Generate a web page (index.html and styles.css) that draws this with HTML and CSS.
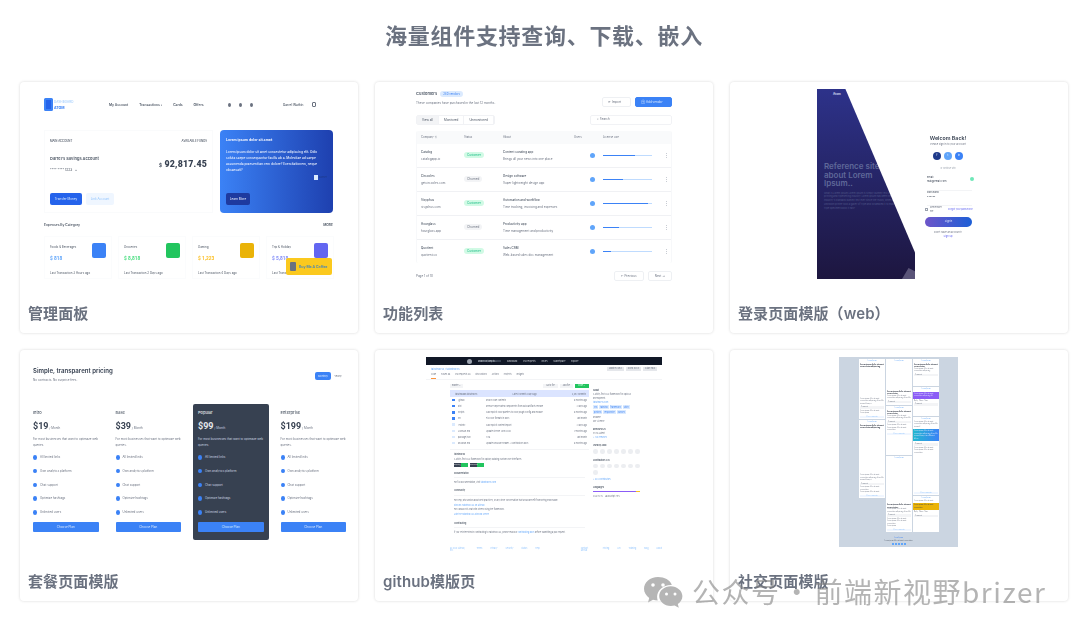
FILE: index.html
```html
<!DOCTYPE html>
<html lang="zh-CN">
<head>
    <meta charset="UTF-8">
    <title>海量组件</title>
    <link rel="stylesheet" href="styles.css">
</head>
<body>
    <h1 class="page-title">海量组件支持查询、下载、嵌入</h1>

    <div class="card-grid">
        <!-- Dashboard -->
        <div class="card">
            <div class="thumb dash">
                <div class="dash-nav">
                    <div class="dash-brand">
                        <div class="dash-logo"></div>
                        <div><div class="dash-brand-top">DASHBOARD</div><div class="dash-brand-name">ATOM</div></div>
                    </div>
                    <div class="dash-links"><span>My Account</span><span>Transactions ›</span><span>Cards</span><span>Offers</span></div>
                    <div class="dash-dots"><i></i><i></i><i></i></div>
                    <div class="dash-user">Darrel Watkin</div>
                    <div class="dash-exit"></div>
                </div>
                <div class="dash-panels">
                    <div class="account">
                        <div class="account-top"><span>MAIN ACCOUNT</span><span>AVAILABLE FUNDS</span></div>
                        <div class="account-mid">
                            <div>
                                <div class="account-name">Darrel's Savings Account</div>
                                <div class="account-no">**** **** 1223 &nbsp; ⌄</div>
                            </div>
                            <div class="account-sum"><small>$</small> 92,817.45</div>
                        </div>
                        <div class="account-btns"><span class="btn-blue">Transfer Money</span><span class="btn-pale">Link Account</span></div>
                    </div>
                    <div class="promo">
                        <div class="promo-title">Lorem ipsum dolor sit amet</div>
                        <p>Lorem ipsum dolor sit amet consectetur adipiscing elit. Odio soluta saepe consequuntur facilis ab a. Molestiae ad saepe assumenda praesentium rem dolore? Exercitationem, neque obcaecati?</p>
                        <div class="promo-img"><i></i>banner</div>
                        <span class="promo-btn">Learn More</span>
                    </div>
                </div>
                <div class="dash-head"><span>Expenses By Category</span><span>MORE</span></div>
                <div class="cats">
                    <div class="cat"><div class="cat-text"><span>Foods &amp; Beverages</span><b class="c-blue">$ 818</b></div><div class="cat-icon bg-blue"></div><em>Last Transaction 3 Hours ago</em></div>
                    <div class="cat"><div class="cat-text"><span>Groceries</span><b class="c-green">$ 8,818</b></div><div class="cat-icon bg-green"></div><em>Last Transaction 2 Days ago</em></div>
                    <div class="cat"><div class="cat-text"><span>Gaming</span><b class="c-amber">$ 1,223</b></div><div class="cat-icon bg-amber"></div><em>Last Transaction 4 Days ago</em></div>
                    <div class="cat"><div class="cat-text"><span>Trip &amp; Holiday</span><b class="c-indigo">$ 5,818</b></div><div class="cat-icon bg-indigo"></div><em>Last Transaction 1 Week ago</em></div>
                </div>
                <div class="coffee"><i></i>Buy Me A Coffee</div>
            </div>
            <div class="caption">管理面板</div>
        </div>

        <!-- Customers table -->
        <div class="card">
            <div class="thumb list">
                <div class="list-top">
                    <div>
                        <div class="list-title">Customers <span>240 vendors</span></div>
                        <div class="list-sub">These companies have purchased in the last 12 months.</div>
                    </div>
                    <div class="list-actions"><span class="ghost">⟳ Import</span><span class="solid">⊕ Add vendor</span></div>
                </div>
                <div class="list-tools">
                    <div class="tabs"><span class="on">View all</span><span>Monitored</span><span>Unmonitored</span></div>
                    <div class="search">⌕ Search</div>
                </div>
                <div class="table">
                    <div class="t-row t-head"><span>Company ⇅</span><span>Status</span><span>About</span><span>Users</span><span>License use</span><span></span></div>
                    <div class="t-row"><div><b>Catalog</b><br>catalogapp.io</div><div><span class="tag tag-green">Customer</span></div><div><b>Content curating app</b><br>Brings all your news into one place</div><div><i class="dot"></i></div><div class="bar"><i class="w66"></i></div><div class="more">⋮</div></div>
                    <div class="t-row"><div><b>Circooles</b><br>getcircooles.com</div><div><span class="tag tag-gray">Churned</span></div><div><b>Design software</b><br>Super lightweight design app</div><div><i class="dot"></i></div><div class="bar"><i class="w40"></i></div><div class="more">⋮</div></div>
                    <div class="t-row"><div><b>Sisyphus</b><br>sisyphus.com</div><div><span class="tag tag-green">Customer</span></div><div><b>Automation and workflow</b><br>Time tracking, invoicing and expenses</div><div><i class="dot"></i></div><div class="bar"><i class="w92"></i></div><div class="more">⋮</div></div>
                    <div class="t-row"><div><b>Hourglass</b><br>hourglass.app</div><div><span class="tag tag-gray">Churned</span></div><div><b>Productivity app</b><br>Time management and productivity</div><div><i class="dot"></i></div><div class="bar"><i class="w33"></i></div><div class="more">⋮</div></div>
                    <div class="t-row"><div><b>Quotient</b><br>quotient.co</div><div><span class="tag tag-green">Customer</span></div><div><b>Sales CRM</b><br>Web-based sales doc management</div><div><i class="dot"></i></div><div class="bar"><i class="w16"></i></div><div class="more">⋮</div></div>
                </div>
                <div class="pager"><span>Page 1 of 10</span><div><span class="ghost">← Previous</span><span class="ghost">Next →</span></div></div>
            </div>
            <div class="caption">功能列表</div>
        </div>

        <!-- Login -->
        <div class="card">
            <div class="thumb login">
                <div class="login-art">
                    <div class="login-logo">Atom</div>
                    <h3>Reference site<br>about Lorem<br>Ipsum..</h3>
                    <p>What is Lorem Ipsum Lorem Ipsum is simply dummy text of the printing and typesetting industry Lorem Ipsum has been the industry's standard dummy text ever since the 1500s, when an unknown printer took a galley of type and scrambled it to make a type specimen book it has?</p>
                </div>
                <div class="login-form">
                    <div class="login-title">Welcom Back!</div>
                    <div class="login-sub">Please sign in to your account</div>
                    <div class="socials"><span class="s1">f</span><span class="s2">t</span><span class="s3">in</span></div>
                    <div class="login-or">or continue with</div>
                    <div class="field field-first"><label>Email</label><div>mail@email.com</div><i></i></div>
                    <div class="field"><label>Password</label><div>••••••</div></div>
                    <div class="login-opts"><i></i><span>Remember me</span><a>Forgot your password?</a></div>
                    <div class="login-btn">Signin</div>
                    <div class="login-foot">Don't have an account?<br><a>Sign up</a></div>
                </div>
            </div>
            <div class="caption">登录页面模版（web）</div>
        </div>

        <!-- Pricing -->
        <div class="card">
            <div class="thumb price">
                <div class="price-top">
                    <div><div class="price-title">Simple, transparent pricing</div><div class="price-sub">No contracts. No surprise fees.</div></div>
                    <div class="toggle"><span class="on">Monthly</span><span>Yearly</span></div>
                </div>
                <div class="plans">
                    <div class="plan"><div class="plan-name">Intro</div><div class="plan-cost"><b>$19</b> / Month</div><p>For most businesses that want to optimaze web queries.</p><ul><li>All limited links</li><li>Own analytics platform</li><li>Chat support</li><li>Optimize hashtags</li><li>Unlimited users</li></ul><div class="plan-btn">Choose Plan</div></div>
                    <div class="plan"><div class="plan-name">Base</div><div class="plan-cost"><b>$39</b> / Month</div><p>For most businesses that want to optimaze web queries.</p><ul><li>All limited links</li><li>Own analytics platform</li><li>Chat support</li><li>Optimize hashtags</li><li>Unlimited users</li></ul><div class="plan-btn">Choose Plan</div></div>
                    <div class="plan plan-dark"><div class="plan-name">Popular</div><div class="plan-cost"><b>$99</b> / Month</div><p>For most businesses that want to optimaze web queries.</p><ul><li>All limited links</li><li>Own analytics platform</li><li>Chat support</li><li>Optimize hashtags</li><li>Unlimited users</li></ul><div class="plan-btn">Choose Plan</div></div>
                    <div class="plan"><div class="plan-name">Enterprise</div><div class="plan-cost"><b>$199</b> / Month</div><p>For most businesses that want to optimaze web queries.</p><ul><li>All limited links</li><li>Own analytics platform</li><li>Chat support</li><li>Optimize hashtags</li><li>Unlimited users</li></ul><div class="plan-btn">Choose Plan</div></div>
                </div>
            </div>
            <div class="caption">套餐页面模版</div>
        </div>

        <!-- Github -->
        <div class="card">
            <div class="thumb gh">
                <div class="gh-shot">
                    <div class="gh-bar"><i></i><span class="gh-search">Search or jump to...</span><span>Dashboard</span><span>Pull requests</span><span>Issues</span><span>Marketplace</span><span>Explore</span></div>
                    <div class="gh-repo"><a>tailwindcss / tailwindcss</a><div><span>Watch 453</span><span>Fork 38.8</span><span>Star 740</span></div></div>
                    <div class="gh-tabs"><span class="on">Code</span><span>Issues 88</span><span>Pull requests 38</span><span>Discussions</span><span>Actions</span><span>Projects</span><span>Insights</span></div>
                    <div class="gh-main">
                        <div class="gh-left">
                            <div class="gh-tools"><span>master ⌄</span><div><span>Go to file</span><span>Add file</span><span class="green">Code ⌄</span></div></div>
                            <div class="gh-commit"><span>tailwindlabs/tailwindcss</span><span>Latest commit 8 days ago</span><span>3,492 commits</span></div>
                            <div class="gh-file"><i class="folder"></i><span>.github</span><span>Reach code contents</span><span>8 months ago</span></div>
                            <div class="gh-file"><i class="folder"></i><span>dist</span><span>Remove deprecated components from build artifacts release</span><span>2 days ago</span></div>
                            <div class="gh-file"><i class="folder"></i><span>scripts</span><span>Add explicit color palettes to color plugin config and module</span><span>8 months ago</span></div>
                            <div class="gh-file"><i class="folder"></i><span>src</span><span>Fix color formats in docs</span><span>last month</span></div>
                            <div class="gh-file"><i></i><span>.eslintrc</span><span>Add explicit content import</span><span>2 days ago</span></div>
                            <div class="gh-file"><i></i><span>LICENSE.md</span><span>Update license 2019/2020</span><span>7 months ago</span></div>
                            <div class="gh-file"><i></i><span>package.json</span><span>1.9.6</span><span>last month</span></div>
                            <div class="gh-file"><i></i><span>README.md</span><span>Update README header + Contributors docs</span><span>8 months ago</span></div>
                            <div class="gh-read">
                                <b>tailwindcss</b>
                                <p>A utility-first CSS framework for rapidly building custom user interfaces.</p>
                                <div class="gh-badges"><span>build passing</span><span>downloads 83M</span></div>
                                <b class="rule">Documentation</b>
                                <p class="after-rule">For full documentation, visit <a>tailwindcss.com</a></p>
                                <b class="rule">Community</b>
                                <p class="after-rule">For help, discussion about best practices, or any other conversation that would benefit from being searchable:</p>
                                <p><a>Discuss Tailwind CSS on GitHub</a></p>
                                <p>For casual chit-chat with others using the framework:</p>
                                <p><a>Join the Tailwind CSS Discord Server</a></p>
                                <b class="rule">Contributing</b>
                                <p class="after-rule">If you're interested in contributing to Tailwind CSS, please read our <a>contributing docs</a> before submitting a pull request.</p>
                            </div>
                        </div>
                        <div class="gh-side">
                            <b>About</b>
                            <p>A utility-first CSS framework for rapid UI development.</p>
                            <p><a>tailwindcss.com</a></p>
                            <div class="gh-topics"><span>css</span><span>tailwind</span><span>framework</span><span>utility</span><span>postcss</span><span>responsive</span><span>classes</span></div>
                            <p>Readme</p><p>MIT License</p>
                            <b>Releases 125</b>
                            <p>v1.9.6 Latest</p>
                            <p><a>+ 124 releases</a></p>
                            <b>Used by 206k</b>
                            <div class="gh-faces small"><i></i><i></i><i></i><i></i><i></i><i></i><i></i></div>
                            <b>Contributors 335</b>
                            <div class="gh-faces"><i></i><i></i><i></i><i></i><i></i><i></i><i></i><i></i></div>
                            <p><a>+ 324 contributors</a></p>
                            <b>Languages</b>
                            <div class="gh-lang"></div>
                            <p>CSS 92.1% &nbsp; JavaScript 7.9%</p>
                        </div>
                    </div>
                    <div class="gh-foot"><span>© 2020 GitHub, Inc.</span><span>Terms</span><span>Privacy</span><span>Security</span><span>Status</span><span>Help</span><span class="gap">Contact GitHub</span><span>Pricing</span><span>API</span><span>Training</span><span>Blog</span><span>About</span></div>
                </div>
            </div>
            <div class="caption">github模版页</div>
        </div>

        <!-- Social feed -->
        <div class="card">
            <div class="thumb social">
                <div class="social-shot">
                    <div class="social-cols">
                        <div class="social-col">
                            <div class="post h60"><a class="who">Lorem Ipsum</a><b>Lorem ipsum dolor sit amet consectetur adipiscing</b><div class="push"></div><p>Lorem ipsum dolor sit amet consectetur adipiscing elit sed do eiusmod tempor</p><div class="reply">Comment</div><p>Lorem ipsum dolor sit amet</p><p>Lorem ipsum</p><div class="view">View comments</div></div>
                            <div class="post h78"><a class="who">Lorem Ipsum</a><b>Lorem ipsum dolor sit amet consectetur adipiscing</b><div class="push"></div><p>Lorem ipsum dolor sit amet consectetur adipiscing elit sed do eiusmod tempor</p><div class="reply">Comment</div><p>Lorem ipsum dolor sit amet consectetur</p><p>Lorem ipsum dolor sit amet</p><div class="view">View comments</div></div>
                        </div>
                        <div class="social-col">
                            <div class="post h46"><a class="who">Lorem Ipsum</a><div class="push"></div><b>Lorem ipsum dolor sit amet consectetur</b><p>Lorem ipsum dolor sit amet consectetur adipiscing elit sed do</p><div class="reply">Comment</div></div>
                            <div class="post h49"><a class="who">Lorem Ipsum</a><b>Lorem ipsum dolor sit amet consectetur</b><p>Lorem ipsum dolor sit amet consectetur adipiscing elit sed do</p><div class="reply">Comment</div><p>Lorem ipsum dolor sit amet</p><p>Lorem ipsum dolor sit amet consectetur</p><div class="view">View comments</div></div>
                            <div class="post h76"><a class="who">Lorem Ipsum</a><div class="push"></div><b>Lorem ipsum dolor sit amet consectetur</b><p>Lorem ipsum dolor sit amet consectetur adipiscing elit sed do</p><div class="reply">Comment</div><p>Lorem ipsum dolor sit amet</p><p>Lorem ipsum dolor sit amet consectetur</p><p>Lorem ipsum</p><div class="view">View comments</div></div>
                        </div>
                        <div class="social-col">
                            <div class="post h27"><a class="who">Lorem Ipsum</a><b>Lorem ipsum dolor sit amet consectetur</b><p>Lorem ipsum dolor sit amet consectetur adipiscing</p><div class="reply">Comment</div></div>
                            <div class="post h29"><a class="who">Lorem Ipsum</a><div class="band purple">Lorem ipsum dolor sit amet consectetur adipiscing elit</div><p>Reply &nbsp; Share &nbsp; Save</p><div class="reply">Comment</div></div>
                            <div class="post h78"><a class="who">Lorem Ipsum</a><p>Lorem ipsum dolor sit amet consectetur adipiscing elit sed do eiusmod</p><div class="band cyan">Lorem ipsum dolor sit amet consectetur adipiscing elit sed do eiusmod tempor incididunt ut labore</div><div class="reply">Comment</div><p>Lorem ipsum dolor sit amet</p><p>Lorem ipsum dolor sit amet consectetur</p><div class="push"></div><div class="view">View comments</div></div>
                            <div class="post h36"><a class="who">Lorem Ipsum</a><p>Lorem ipsum dolor sit amet</p><div class="band amber">Lorem ipsum dolor sit amet consectetur</div><p>Reply &nbsp; Share &nbsp; Save</p><div class="reply">Comment</div></div>
                        </div>
                    </div>
                    <div class="social-foot"><a>Lorem Ipsum</a><br>Lorem ipsum dolor sit amet consectetur<div class="social-icons"><i></i><i></i><i></i><i></i><i></i></div></div>
                </div>
            </div>
            <div class="caption">社交页面模版</div>
        </div>
    </div>

    <!-- WeChat watermark -->
    <div class="watermark">
        <svg class="wm-icon" viewBox="0 0 40 34" width="40" height="34">
            <path d="M15 1C7 1 1 6.300 1 12.800c0 3.700 2 6.900 5.200 9.100L5 26.400l5-2.700c1.500.4 3 .6 4.700.7-.4-1.200-.6-2.400-.6-3.600 0-6.700 6.100-11.900 13.700-11.900h1C27 3.900 21.500 1 15 1z" fill="#b5b5b5"/>
            <path d="M27.800 10.200c-6.500 0-11.600 4.400-11.600 9.900s5.100 9.900 11.600 9.900c1.300 0 2.600-.2 3.800-.5l4.200 2.300-1-3.700c2.800-1.800 4.600-4.700 4.600-8 0-5.500-5.600-9.900-11.600-9.900z" fill="#b5b5b5"/>
            <circle cx="10" cy="9" r="1.800" fill="#fff"/><circle cx="20" cy="9" r="1.800" fill="#fff"/>
            <circle cx="23.500" cy="18" r="1.500" fill="#fff"/><circle cx="32" cy="18" r="1.500" fill="#fff"/>
        </svg>
        <span>公众号 · 前端新视野brizer</span>
    </div>
</body>
</html>
```

FILE: styles.css
```css
* { margin: 0; padding: 0; box-sizing: border-box; }
html, body { height: 635px; overflow: hidden; }
body { position: relative; background: white; font-family: "Inter", "Noto Sans CJK SC", sans-serif; color: #374151; }
i { display: block; font-style: normal; }
em { font-style: normal; }
ul { list-style: none; }

.page-title {
    padding: 20px 0 0 8px; height: 82px; text-align: center;
    font-size: 22px; line-height: 32px; font-weight: 600; letter-spacing: .7px;
    color: #6b7280; filter: blur(.45px);
}

.card-grid { display: grid; grid-template-columns: repeat(3, 338px); gap: 17px; margin-left: 20px; }
.card {
    height: 251px; display: flex; flex-direction: column; background: white;
    border-radius: 4px; box-shadow: 0 0 3px rgba(0,0,0,.16);
}
.thumb { position: relative; height: 213px; overflow: hidden; filter: blur(.72px); }
.caption {
    padding: 8px 8px 0; font-size: 15px; line-height: 22px; font-weight: 600;
    letter-spacing: .1px; color: #6b7280; filter: blur(.4px);
}

/* Dashboard */
.dash { padding: 16px 25px 0 24px; font-size: 3px; }
.dash-nav { display: flex; align-items: center; height: 13px; }
.dash-brand { display: flex; align-items: center; gap: 1px; width: 65px; }
.dash-logo { width: 9px; height: 13px; border-radius: 1.500px; background: #2563eb; border: 2px solid #3b82f6; }
.dash-brand-top { font-size: 3px; color: #93c5fd; letter-spacing: .1px; }
.dash-brand-name { margin-top: 2px; font-size: 3.500px; font-weight: 700; color: #3b82f6; }
.dash-links { display: flex; gap: 11px; width: 119px; font-size: 3.300px; font-weight: 600; color: #4b5563; }
.dash-dots { display: flex; gap: 8px; width: 55px; }
.dash-dots i { width: 3px; height: 4px; border-radius: 50%; background: #6b7280; }
.dash-user { width: 29px; font-size: 3.200px; font-weight: 500; color: #4b5563; }
.dash-exit { width: 4px; height: 5px; border: 1px solid #6b7280; border-radius: 1px; }
.dash-panels { display: grid; grid-template-columns: 169px 113px; gap: 7px; height: 83px; margin-top: 19px; }
.account { display: flex; flex-direction: column; padding: 8px 5px 7px 5px; border: 1px solid #fafbfc; }
.account-top { display: flex; justify-content: space-between; font-size: 2.800px; font-weight: 500; color: #4b5563; }
.account-mid { display: flex; justify-content: space-between; margin-top: 13px; flex: 1; }
.account-name { font-size: 4px; font-weight: 600; color: #4b5563; }
.account-no { margin-top: 7px; font-size: 3.200px; font-weight: 500; color: #4b5563; }
.account-sum { margin-top: 3px; font-family: "Roboto", sans-serif; font-size: 8.800px; font-weight: 900; color: #374151; letter-spacing: .2px; }
.account-sum small { font-size: 5px; }
.account-btns { display: flex; gap: 4px; }
.btn-blue, .btn-pale { height: 12px; line-height: 12px; text-align: center; border-radius: 2px; font-size: 3px; }
.btn-blue { width: 32px; background: #2563eb; color: #dbeafe; }
.btn-pale { width: 28px; background: #eff6ff; color: #93c5fd; }
.promo { display: flex; flex-direction: column; padding: 8px 6px 8px 6px; border-radius: 4px; background: linear-gradient(90deg, #3b82f6, #1e40af); color: #f1f5ff; }
.promo-title { font-size: 3.500px; font-weight: 700; }
.promo p { margin-top: 7px; font-size: 3.200px; font-weight: 500; line-height: 6px; }
.promo-img { display: flex; justify-content: flex-end; align-items: center; gap: 1px; margin-top: 2px; font-size: 2.500px; color: #1e3a8a; }
.promo-img i { width: 4px; height: 5px; background: #dbeafe; }
.promo-btn { width: 24px; height: 12px; margin-top: auto; line-height: 12px; text-align: center; border-radius: 2px; background: #1e3a9f; font-size: 3px; }
.dash-head { display: flex; justify-content: space-between; margin-top: 10px; font-size: 3.300px; font-weight: 600; color: #4b5563; }
.cats { display: grid; grid-template-columns: repeat(4, 68px); gap: 6px; margin-top: 9px; }
.cat { display: grid; grid-template-columns: 1fr 14px; height: 43px; padding: 8px 5px 0 5px; border: 1px solid #fbfcfd; }
.cat-text span { font-size: 2.900px; color: #4b5563; }
.cat-text b { display: block; margin-top: 7px; font-family: "Roboto", sans-serif; font-size: 4.800px; }
.cat-icon { height: 15px; margin-top: -2px; border-radius: 2px; }
.cat em { grid-column: 1 / 3; margin-top: 6px; font-size: 2.900px; color: #4b5563; }
.c-blue { color: #60a5fa; } .c-green { color: #4ade80; } .c-amber { color: #fbbf24; } .c-indigo { color: #818cf8; }
.bg-blue { background: #3b82f6; } .bg-green { background: #22c55e; } .bg-amber { background: #eab308; } .bg-indigo { background: #6366f1; }
.coffee {
    position: absolute; left: 266px; top: 176px; width: 46px; height: 17px;
    display: flex; align-items: center; gap: 3px; padding-left: 4px; border-radius: 2px;
    background: #fbc91e; font-size: 3.500px; font-weight: 600; color: #3b82c4;
}
.coffee i { width: 6px; height: 9px; border-radius: 1px; background: #6b7280; }

/* Customers list */
.list { padding: 9px 41px 0 41px; font-size: 3px; color: #6b7280; }
.list-top { display: flex; justify-content: space-between; height: 24px; }
.list-title { font-size: 4px; font-weight: 600; color: #4b5563; }
.list-title span { margin-left: 2px; padding: 1px 3px; border-radius: 3px; background: #dbeafe; font-size: 2.800px; font-weight: 400; color: #3b82f6; }
.list-sub { margin-top: 5px; font-size: 3px; }
.list-actions { display: flex; gap: 4px; margin-top: 6px; height: 10px; }
.ghost, .solid { display: inline-block; height: 10px; line-height: 9px; padding: 0 5px; border: 1px solid #eef0f3; border-radius: 2px; font-size: 3px; }
.list-actions .ghost { width: 29px; }
.solid { width: 37px; background: #3b82f6; border-color: #3b82f6; color: #dbeafe; }
.list-tools { display: flex; justify-content: space-between; height: 10px; }
.tabs { display: flex; border: 1px solid #f1f2f5; border-radius: 2px; font-size: 3px; }
.tabs span { padding: 0 5px; line-height: 9px; border-right: 1px solid #f1f2f5; color: #4b5563; }
.tabs .on { background: #f3f4f6; }
.search { width: 82px; padding-left: 6px; border: 1px solid #f1f2f5; border-radius: 2px; line-height: 7px; font-size: 3px; }
.table { margin-top: 6px; height: 132px; overflow: hidden; border-left: 1px solid #f7f8fa; border-right: 1px solid #f7f8fa; border-radius: 2px; }
.t-row { display: grid; grid-template-columns: 43px 39px 71px 29px 59px 1fr; align-items: center; height: 24px; padding-left: 4px; border-bottom: 1px solid #f0f1f4; font-size: 3px; line-height: 7px; }
.t-row b { font-weight: 500; color: #4b5563; }
.t-head { height: 13px; background: #f9fafb; border: 0; font-size: 2.800px; }
.tag { display: inline-block; height: 6px; line-height: 6px; padding: 0 3px; border-radius: 3px; }
.tag-green { background: #d1fae5; color: #10b981; }
.tag-gray { background: #f3f4f6; color: #6b7280; }
.dot { width: 5px; height: 5px; margin-left: 16px; border-radius: 50%; background: #60a5fa; }
.bar { height: 1px; width: 49px; background: #bfdbfe; }
.bar i { height: 1px; background: #3b82f6; }
.w66 { width: 66%; } .w40 { width: 40%; } .w92 { width: 92%; } .w33 { width: 33%; } .w16 { width: 16%; }
.more { color: #9ca3af; font-size: 5px; text-align: center; }
.pager { display: flex; justify-content: space-between; align-items: center; margin-top: 8px; }
.pager div { display: flex; gap: 4px; }
.pager .ghost { padding: 0 6px; }

/* Login */
.login { display: flex; padding: 7px 0 0 87px; }
.login-art {
    position: relative; width: 98px; height: 190px; padding: 3px 7px; color: #5f6899;
    background: linear-gradient(180deg, #2d328a, #1d163f);
    clip-path: polygon(0 0, 29% 0, 100% 86%, 100% 100%, 0 100%);
}
.login-art::after {
    content: ""; position: absolute; right: 0; bottom: 0; width: 13px; height: 11px;
    background: #5a5478; clip-path: polygon(0 100%, 50% 0, 100% 30%, 100% 100%);
}
.login-logo { padding-left: 9px; font-size: 3px; font-weight: 600; color: #e0e7ff; }
.login-art h3 { margin-top: 66px; white-space: nowrap; font-size: 8px; line-height: 8.600px; font-weight: 600; }
.login-art p { width: 75px; margin-top: 4px; font-size: 2.400px; line-height: 3.700px; color: #4f5688; }
.login-form { width: 66px; padding-top: 46px; text-align: center; font-size: 2.500px; line-height: 4px; color: #6b7280; }
.login-title { height: 6px; line-height: 6px; font-size: 5.300px; font-weight: 600; color: #374151; }
.login-sub { margin-top: 2px; }
.socials { display: flex; justify-content: center; gap: 3px; margin-top: 5px; }
.socials span { width: 8px; height: 8px; line-height: 8px; border-radius: 50%; color: white; }
.s1 { background: #1e3a8a; } .s2 { background: #60a5fa; } .s3 { background: #3b82f6; }
.login-or { margin-top: 6px; font-size: 2px; color: #9ca3af; }
.field { position: relative; height: 15px; margin: 0 9px 0 12px; text-align: left; border-bottom: 1px solid #f3f4f6; color: #374151; }
.field-first { margin-top: 6px; }
.field i { position: absolute; right: -2px; top: 1px; width: 4px; height: 4px; border-radius: 50%; background: #6ee7b7; }
.login-opts { display: grid; grid-template-columns: 3px 15px 1fr; gap: 2px; margin-left: 10px; text-align: left; align-items: center; font-size: 2.300px; line-height: 3.500px; }
.login-opts i { width: 3px; height: 3px; border: 1px solid #9ca3af; }
.login-opts a { padding-left: 1px; color: #6366f1; }
.login-btn { margin: 4px 0 0 10px; width: 47px; height: 10px; line-height: 10px; border-radius: 5px; background: linear-gradient(90deg, #6d55c9, #1d5fd6); color: #e0e7ff; }
.login-foot { margin-top: 4px; }
.login-foot a { color: #6366f1; }

/* Pricing */
.price { padding: 17px 13px 0; font-size: 3px; color: #6b7280; }
.price-top { display: flex; justify-content: space-between; height: 38px; }
.price-title { font-size: 6.100px; font-weight: 600; color: #374151; }
.price-sub { margin-top: 4px; font-size: 3px; }
.toggle { display: flex; height: 8px; margin-top: 5px; font-size: 2.600px; line-height: 8px; }
.toggle span { width: 14px; text-align: center; }
.toggle .on { width: 16px; border-radius: 2px; background: #3b82f6; color: #dbeafe; }
.plans { display: grid; grid-template-columns: repeat(4, 65.500px); gap: 17px; margin-top: -1px; }
.plan { position: relative; height: 136px; padding-top: 6px; }
.plan-dark { padding: 6px 5px 0; margin: 0 -5px; background: #374151; border-radius: 2px; color: #cbd5e1; }
.plan-name { font-size: 4px; line-height: 6px; font-weight: 500; color: #4b5563; }
.plan-dark .plan-name, .plan-dark .plan-cost b { color: #e5e7eb; }
.plan-cost { margin-top: 4px; height: 12px; line-height: 12px; font-size: 3px; }
.plan-cost b { font-family: "Roboto", sans-serif; font-size: 9px; color: #374151; }
.plan p { margin-top: 5px; height: 14px; font-size: 2.900px; line-height: 5.600px; }
.plan ul { margin-top: 3px; }
.plan li { position: relative; height: 13.800px; line-height: 7px; padding-left: 7px; font-size: 2.900px; }
.plan li::before { content: ""; position: absolute; left: 0; top: 1px; width: 4px; height: 4.500px; border-radius: 50%; background: #3b82f6; }
.plan-btn { height: 10px; line-height: 10px; margin-top: -1px; text-align: center; background: #3b82f6; border-radius: 1px; color: #dbeafe; font-size: 3px; }

/* Github */
.gh { padding: 7px 0 0 51px; }
.gh-shot { width: 236px; font-size: 2px; color: #6b7280; }
.gh-shot a { color: #60a5fa; }
.gh-bar { display: flex; align-items: center; gap: 6px; height: 8px; padding-left: 41px; background: #111827; color: #d1d5db; }
.gh-bar i { width: 5px; height: 5px; border-radius: 50%; background: #9ca3af; }
.gh-search { width: 23px; background: #374151; }
.gh-repo { display: flex; justify-content: space-between; padding: 3px 5px 0; height: 8px; font-size: 2.500px; }
.gh-repo div { display: flex; gap: 2px; margin-top: -1px; }
.gh-repo div span { padding: 0 2px; height: 4px; background: #e5e7eb; }
.gh-tabs { display: flex; gap: 5px; padding-left: 5px; height: 7px; border-bottom: 1px solid #f3f4f6; }
.gh-tabs .on { border-bottom: 1px solid #fb923c; }
.gh-main { display: flex; padding-left: 24px; }
.gh-left { width: 139px; padding-top: 4px; }
.gh-tools { display: flex; justify-content: space-between; height: 6px; }
.gh-tools > span { background: #f3f4f6; padding: 0 2px; height: 4px; }
.gh-tools div { display: flex; gap: 2px; }
.gh-tools div span { padding: 0 3px; height: 4px; background: #f3f4f6; }
.gh-tools .green { background: #22c55e; color: #dcfce7; width: 14px; }
.gh-commit { display: flex; justify-content: space-between; align-items: center; height: 7px; padding: 0 3px 0 5px; background: #dbe4ff; }
.gh-file { display: grid; grid-template-columns: 6px 28px 1fr auto; align-items: center; height: 6.150px; padding: 0 2px; }
.gh-file i { width: 3px; height: 2.500px; background: #dbeafe; }
.gh-file .folder { background: #3b82f6; }
.gh-read { margin-top: 3px; padding: 2px 4px 0; border-top: 1px solid #f3f4f6; line-height: 4.700px; }
.gh-read b { display: block; font-weight: 600; color: #4b5563; }
.gh-read p { margin-bottom: .2px; }
.gh-read .rule { margin-top: 4px; padding-bottom: 1.500px; border-bottom: 1px solid #f3f4f6; }
.gh-read .after-rule { margin-top: 2px; }
.gh-badges { display: flex; gap: 2px; height: 4px; margin-top: 1px; line-height: 3px; }
.gh-badges span { width: 14px; font-size: 1px; background: linear-gradient(90deg, #374151 50%, #22c55e 50%); color: white; }
.gh-side { width: 47px; margin-left: 4px; padding-top: 4px; line-height: 4px; }
.gh-side b { display: block; margin-top: 4px; color: #4b5563; }
.gh-topics { display: flex; flex-wrap: wrap; gap: 1px; margin: 1px 0; }
.gh-topics span { padding: 0 1px; background: #dbeafe; color: #3b82f6; }
.gh-faces { display: grid; grid-template-columns: repeat(7, 7px); gap: 2px 0; margin: 2px 0; }
.gh-faces i { width: 4.500px; height: 4.500px; border-radius: 50%; background: #eceef1; }
.gh-lang { height: 1.500px; margin: 2px 0; background: linear-gradient(90deg, #8b5cf6 92%, #fbbf24 92%); }
.gh-foot { display: flex; gap: 8px; padding: 12px 0 0 24px; color: #93c5fd; }
.gh-foot .gap { margin-left: 33px; }

/* Social */
.social { padding: 7px 0 0 109px; }
.social-shot { width: 119px; height: 190px; padding: 2px 0 0 20px; background: #cbd5e1; font-size: 1.500px; line-height: 2.500px; color: #6b7280; }
.social-cols { display: flex; gap: 1px; height: 178px; align-items: flex-start; }
.social-col { width: 26px; display: flex; flex-direction: column; gap: 1px; }
.post { display: flex; flex-direction: column; padding: 1px; background: white; overflow: hidden; }
.post b { color: #111827; font-size: 1.800px; }
.post .who { color: #60a5fa; text-align: center; }
.push { flex: 1; }
.reply { margin: 1px 0; padding-left: 1px; background: #f3f4f6; }
.view { margin-top: 1px; text-align: center; color: #93c5fd; background: #f0f6ff; }
.band { margin: 1px -1px; padding: 1px; color: #e0e7ff; }
.purple { background: #8b5cf6; }
.cyan { background: linear-gradient(90deg, #22b8cf, #3b82f6); }
.amber { background: #eab308; color: #374151; }
.h60 { height: 60px; } .h78 { height: 78px; } .h46 { height: 46px; } .h49 { height: 49px; }
.h76 { height: 76px; } .h27 { height: 27px; } .h29 { height: 29px; } .h36 { height: 36px; }
.social-foot { margin-left: -20px; text-align: center; color: #4b5563; }
.social-foot a { color: #3b82f6; }
.social-icons { display: flex; justify-content: center; gap: 1px; margin-top: 1px; }
.social-icons i { width: 2px; height: 2px; background: #60a5fa; }

/* Watermark */
.watermark { position: absolute; left: 643px; top: 572px; display: flex; align-items: center; gap: 9px; filter: blur(.4px); }
.wm-icon { margin-top: 4px; }
.watermark span { font-family: "Noto Sans CJK SC", sans-serif; font-size: 28px; line-height: 36px; font-weight: 400; letter-spacing: 1.500px; word-spacing: -5.500px; color: rgba(130,130,130,.6); }
```
